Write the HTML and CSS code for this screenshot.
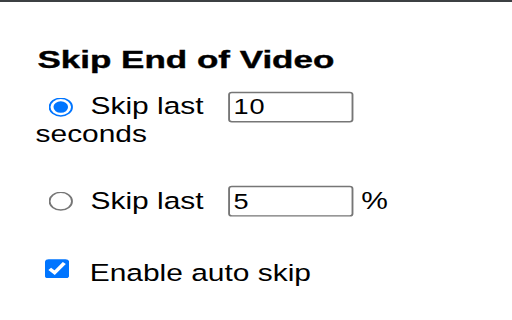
FILE: index.html
```html
<!DOCTYPE html>
<html lang="en">
<head>
<meta charset="utf-8">
<title>Skip End of Video</title>
<link rel="stylesheet" href="styles.css">
</head>
<body>
<div class="topbar"></div>
<div class="popup">
  <h1 class="title">Skip End of Video</h1>
  <div class="row row-first">
    <input type="radio" name="mode" class="radio" checked>
    <span class="label">Skip last</span>
    <input type="text" class="num" value="10">
  </div>
  <div class="unit">seconds</div>
  <div class="row row-second">
    <input type="radio" name="mode" class="radio">
    <span class="label">Skip last</span>
    <input type="text" class="num" value="5">
    <span class="pct">%</span>
  </div>
  <label class="check-row">
    <input type="checkbox" class="check" checked>
    <span class="check-label">Enable auto skip</span>
  </label>
</div>
</body>
</html>
```
FILE: styles.css
```css
html {
  overflow: hidden;
}
html, body {
  margin: 0;
  padding: 0;
  background: #fff;
}
body {
  min-height: 320px;
  font-family: "Liberation Sans", Arial, sans-serif;
  color: #000;
}
.topbar {
  height: 2px;
  background: #3c4043;
}
.popup {
  width: 260px;
  height: 215px;
  box-sizing: border-box;
  padding: 30.5px 0 0 19px;
  transform: scale(1.87, 1.47);
  transform-origin: 0 0;
  font-size: 16px;
  line-height: 18px;
}
.title {
  width: fit-content;
  margin: 0 0 0 1px;
  font-size: 16px;
  font-weight: bold;
  line-height: 18px;
  white-space: nowrap;
  transform: scaleX(1.17);
  transform-origin: 0 0;
  -webkit-text-stroke: 0.25px #000;
}
.row {
  display: flex;
  align-items: center;
  height: 22px;
}
.row-first {
  margin-top: 11.9px;
}
.radio {
  width: 13px;
  height: 13px;
  margin: 0 9.5px 0 6.9px;
  flex: none;
}
.label {
  margin-right: 13px;
  white-space: nowrap;
}
.num {
  box-sizing: border-box;
  width: 66.8px;
  height: 20.4px;
  margin: 0;
  padding: 0 2px;
  border: 1px solid #767676;
  border-radius: 2px;
  font: 14.5px "Liberation Sans", Arial, sans-serif;
  letter-spacing: 0.5px;
  color: #000;
  background: #fff;
  flex: none;
}
.unit {
  margin-top: -1px;
  line-height: 18px;
}
.row-second {
  margin-top: 25.3px;
}
.pct {
  margin-left: 4.5px;
}
.check-row {
  display: flex;
  align-items: flex-start;
  width: fit-content;
  height: 18px;
  margin-top: 29.7px;
}
.check {
  width: 13px;
  height: 13px;
  margin: -1.8px 11.3px 0 4.7px;
  flex: none;
}
.check-label {
  white-space: nowrap;
}
```
